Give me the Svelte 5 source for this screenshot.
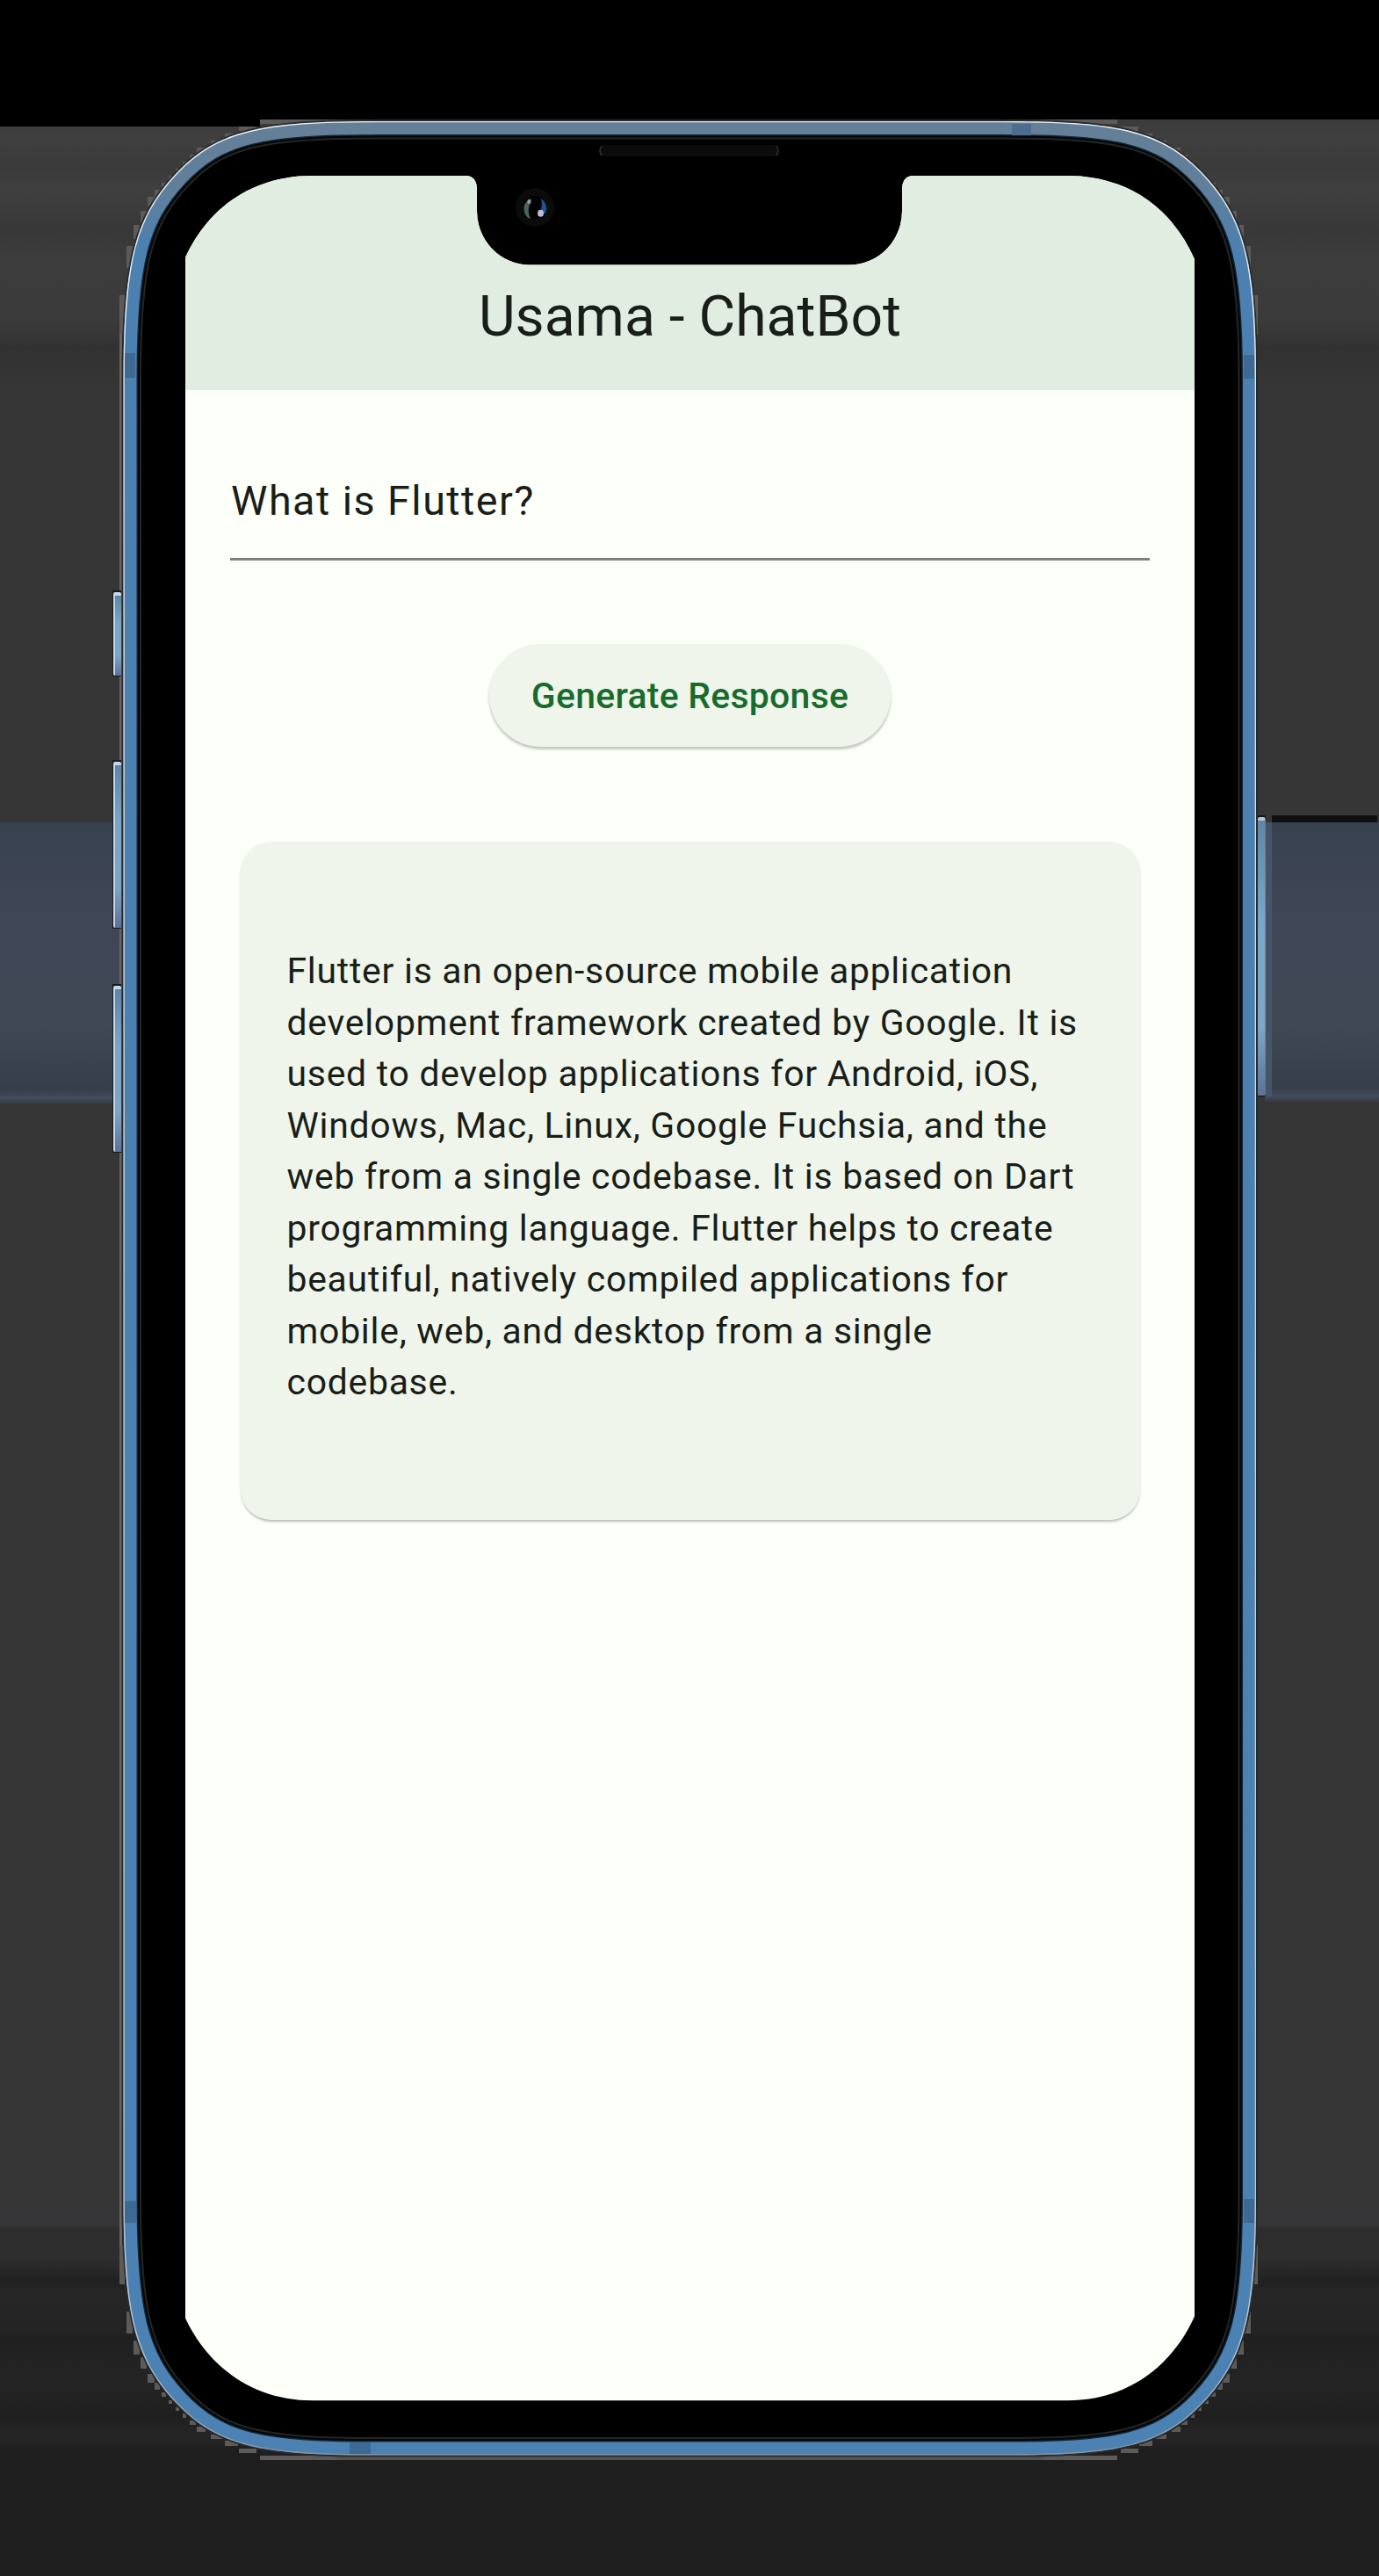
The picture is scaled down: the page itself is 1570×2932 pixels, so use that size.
<script>
  const answer = [
    'Flutter is an open-source mobile application',
    'development framework created by Google. It is',
    'used to develop applications for Android, iOS,',
    'Windows, Mac, Linux, Google Fuchsia, and the',
    'web from a single codebase. It is based on Dart',
    'programming language. Flutter helps to create',
    'beautiful, natively compiled applications for',
    'mobile, web, and desktop from a single',
    'codebase.'
  ];

  const body =
    'M140.5 430C140.5 300 153 248 200 198C248 147 300 138 430 138H1140C1270 138 1322 147 1370 198C1417 248 1430 300 1430 430V2502.6C1430 2632.6 1417 2684.6 1370 2734.6C1322 2785.6 1270 2794.6 1140 2794.6H430C300 2794.6 248 2785.6 200 2734.6C153 2684.6 140.5 2632.6 140.5 2502.6Z';

  // Blocky grey fringe around a corner: x, y, width, height
  const fringe = [
    [136, 336, 6, 45], [144, 280, 7, 25], [152, 256, 7, 16], [160, 240, 7, 13],
    [168, 224, 8, 10], [176, 216, 6, 8], [184, 208, 5, 5], [192, 200, 4, 4],
    [200, 192, 4, 4], [208, 184, 4, 5], [216, 176, 7, 5], [224, 168, 10, 6],
    [240, 160, 15, 5], [256, 152, 15, 6], [272, 144, 20, 5], [296, 136, 87, 5]
  ];
  const corners = [
    '',
    'translate(1568 0) scale(-1 1)',
    'translate(0 2936) scale(1 -1)',
    'translate(1568 2936) scale(-1 -1)'
  ];

  const keys = [[674, 95], [867, 189], [1122, 189]];
</script>

<main class="stage">
  <svg class="device" viewBox="0 0 1570 2932" width="1570" height="2932" aria-hidden="true">
    <defs>
      <linearGradient id="wall" gradientUnits="userSpaceOnUse" x1="0" y1="136" x2="0" y2="2932">
        <stop offset="0" stop-color="#3b3b3b" />
        <stop offset="0.008" stop-color="#3f3f3f" />
        <stop offset="0.02" stop-color="#3a3a3a" />
        <stop offset="0.028" stop-color="#3f3f3f" />
        <stop offset="0.045" stop-color="#383838" />
        <stop offset="0.055" stop-color="#3c3c3c" />
        <stop offset="0.08" stop-color="#3b3b3b" />
        <stop offset="0.09" stop-color="#353535" />
        <stop offset="0.093" stop-color="#313131" />
        <stop offset="0.11" stop-color="#363636" />
        <stop offset="0.84" stop-color="#363636" />
        <stop offset="0.857" stop-color="#363639" />
        <stop offset="0.859" stop-color="#2c2c2c" />
        <stop offset="0.87" stop-color="#2f2f2f" />
        <stop offset="0.88" stop-color="#212121" />
        <stop offset="0.884" stop-color="#262626" />
        <stop offset="0.9" stop-color="#242424" />
        <stop offset="0.903" stop-color="#202020" />
        <stop offset="0.92" stop-color="#242424" />
        <stop offset="0.935" stop-color="#1f1f1f" />
        <stop offset="0.942" stop-color="#252525" />
        <stop offset="0.946" stop-color="#242424" />
        <stop offset="0.948" stop-color="#1f1f1f" />
        <stop offset="1" stop-color="#1f1f1f" />
      </linearGradient>
      <linearGradient id="band" x1="0" y1="0" x2="0" y2="1">
        <stop offset="0" stop-color="#37424f" />
        <stop offset="0.25" stop-color="#3e4554" />
        <stop offset="0.5" stop-color="#404756" />
        <stop offset="0.72" stop-color="#404854" />
        <stop offset="0.95" stop-color="#363e4b" />
        <stop offset="0.98" stop-color="#444b5c" />
        <stop offset="1" stop-color="#363b42" />
      </linearGradient>
      <linearGradient id="rail" gradientUnits="userSpaceOnUse" x1="0" y1="138" x2="0" y2="2795">
        <stop offset="0" stop-color="#657f97" />
        <stop offset="0.03" stop-color="#607f9c" />
        <stop offset="0.055" stop-color="#4b80b0" />
        <stop offset="1" stop-color="#4c82b3" />
      </linearGradient>
      <linearGradient id="shine" gradientUnits="userSpaceOnUse" x1="0" y1="138" x2="0" y2="2795">
        <stop offset="0" stop-color="#e8edf2" />
        <stop offset="0.95" stop-color="#b9c3cf" />
        <stop offset="1" stop-color="#8793a0" />
      </linearGradient>
      <linearGradient id="key" x1="0" y1="0" x2="0" y2="1">
        <stop offset="0" stop-color="#5f86a6" />
        <stop offset="0.35" stop-color="#7ba5c6" />
        <stop offset="0.75" stop-color="#7ea6c5" />
        <stop offset="1" stop-color="#5c7399" />
      </linearGradient>
      <clipPath id="shell"><path d={body} /></clipPath>
    </defs>

    <rect width="1570" height="2932" fill="#000" />
    <rect y="144" width="785" height="2788" fill="url(#wall)" />
    <rect x="785" y="136" width="785" height="2796" fill="url(#wall)" />
    <rect x="296" y="136" width="200" height="8" fill="#3c3c3c" />
    <rect x="0" y="936" width="140" height="320" fill="url(#band)" />
    <rect x="1440" y="936" width="130" height="318" fill="url(#band)" />
    <rect x="1448" y="928" width="120" height="8" fill="#0e0f11" />
    <rect x="1441" y="936" width="7" height="312" fill="#46566a" />
    <rect x="400" y="134" width="790" height="2" fill="#000" />

    {#each corners as t}
      <g transform={t} fill="#5c5b5a">
        {#each fringe as [x, y, w, h]}<rect {x} {y} width={w} height={h} />{/each}
      </g>
    {/each}
    <rect x="136" y="380" width="3" height="2176" fill="#666564" />
    <rect x="383" y="2796" width="805" height="4" fill="#555453" />
    <rect x="383" y="136" width="800" height="2" fill="#454b4d" />

    {#each keys as [y, h]}
      <rect x="128" y={y - 2} width="10" height={h + 3} fill="#151a20" />
      <rect x="129" {y} width="9" height={h} rx="2" fill="#c6d6e6" />
      <rect x="131" y={y + 4} width="7" height={h - 4} fill="url(#key)" />
    {/each}
    <rect x="1431" y="928" width="10" height="320" rx="2" fill="#121518" />
    <rect x="1432" y="930" width="8.5" height="317" rx="2" fill="#b7c6d3" />
    <rect x="1432" y="934" width="8.5" height="313" fill="url(#key)" />

    <path d={body} fill="#000" stroke="#2b2b2b" stroke-width="4" />
    <g clip-path="url(#shell)" fill="none">
      <path d={body} stroke="#252525" stroke-width="41" />
      <path d={body} stroke="#020608" stroke-width="37" />
      <path d={body} stroke="#122532" stroke-width="33" />
      <path d={body} stroke="url(#rail)" stroke-width="30" />
      <path d={body} stroke="url(#shine)" stroke-width="2.6" />
    </g>
    <g fill="#3e6994">
      <rect x="142" y="402" width="12" height="28" />
      <rect x="1416" y="404" width="12" height="27" />
      <rect x="142" y="2505" width="13" height="25" />
      <rect x="1416" y="2503" width="12" height="27" />
      <rect x="1152" y="141" width="22" height="13" fill="#4c6d8e" />
      <rect x="398" y="2780" width="24" height="13" />
    </g>

    <rect x="682.5" y="165" width="204" height="13" rx="6" fill="#0c0c0c" />
    <path d="M685.5 166Q683 168 683 171.500T685.500 177M883.500 166Q886 168 886 171.500T883.500 177" fill="none" stroke="#343434" stroke-width="1.5" />
    <circle cx="609" cy="236" r="22" fill="#0a0b0b" />
    <circle cx="609" cy="236" r="13" fill="#020203" />
    <path d="M605 226Q593 231 598 244Q600 248 604 249Q599 240 605 226Z" fill="#4a655f" />
    <ellipse cx="602.500" cy="229.500" rx="2" ry="2.800" fill="#8d9b9b" />
    <path d="M616 226Q625 232 621 243L615 243Q618 234 616 226Z" fill="#1d5594" />
    <ellipse cx="615.500" cy="242.800" rx="3.500" ry="4" fill="#c2b9dc" />
  </svg>

  <div class="screen">
    <header class="appbar"><h1>Usama - ChatBot</h1></header>
    <div class="content">
      <div class="field">What is Flutter?</div>
      <button class="generate">Generate Response</button>
      <section class="card">
        {#each answer as line}<p>{line}</p>{/each}
      </section>
    </div>
  </div>
</main>

<style>
  :global(body) {
    margin: 0;
    background: #000;
  }
  .stage {
    position: relative;
    box-sizing: border-box;
    width: 1570px;
    height: 2932px;
    padding: 200px 210px 0 211px;
    overflow: hidden;
    font-family: Roboto, 'Liberation Sans', sans-serif;
    color: #191e19;
  }
  .device {
    position: absolute;
    inset: 0;
    display: block;
  }
  .screen {
    position: relative;
    width: 1149px;
    height: 2533px;
    background: #fdfff9;
    clip-path: path('M0 93C25 38 75 0 145 0H319Q332 0 332 16V40A60 61.500 0 0 0 392 101.500H756A60 61.500 0 0 0 816 40V16Q816 0 829 0H1004C1074 0 1124 38 1149 95V2436.500C1124 2492 1074 2532.300 1004 2532.300H145C75 2532.300 25 2492 0 2438.500Z');
  }
  .appbar {
    display: flex;
    box-sizing: border-box;
    height: 244px;
    padding-top: 76px;
    align-items: center;
    justify-content: center;
    background: #e2ede1;
  }
  h1 {
    margin: 0;
    font-size: 64.2px;
    font-weight: 400;
    line-height: 82px;
    white-space: nowrap;
  }
  .content {
    display: flex;
    flex-direction: column;
    align-items: center;
    padding: 91px 51px 0;
  }
  .field {
    box-sizing: border-box;
    align-self: stretch;
    height: 103px;
    padding-left: 1px;
    border-bottom: 3px solid #7d827c;
    font-size: 46.7px;
    line-height: 70px;
    letter-spacing: 1.46px;
  }
  .generate {
    width: 457px;
    height: 117px;
    margin: 95px 0 0;
    padding: 1px 0 0;
    border: 0;
    border-radius: 59px;
    background: #eff5eb;
    box-shadow: 0 3px 3px rgba(0, 0, 0, 0.2), 0 1px 4px rgba(0, 0, 0, 0.05);
    color: #176c2c;
    font: 500 40.9px/60px Roboto, 'Liberation Sans', sans-serif;
    letter-spacing: 0.29px;
    white-space: nowrap;
  }
  .card {
    box-sizing: border-box;
    width: 1024px;
    height: 772px;
    margin-top: 108px;
    padding: 118px 53px 0 53px;
    border-radius: 35px;
    background: #eff5eb;
    box-shadow: 0 3px 3px -1px rgba(0, 0, 0, 0.25), 0 1px 4px rgba(0, 0, 0, 0.04);
  }
  p {
    margin: 0;
    font-size: 40.9px;
    line-height: 58.5px;
    letter-spacing: 0.74px;
    white-space: nowrap;
  }
</style>
